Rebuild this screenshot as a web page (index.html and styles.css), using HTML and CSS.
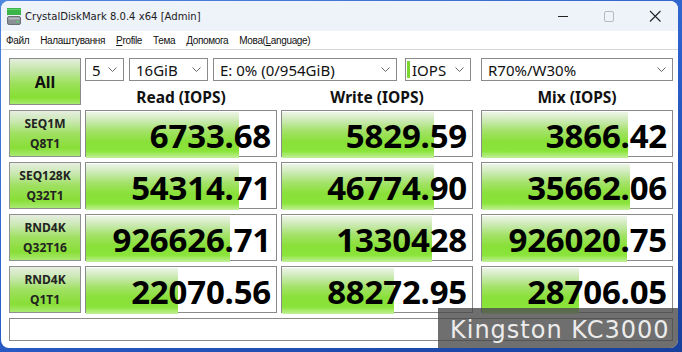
FILE: index.html
```html
<!DOCTYPE html>
<html lang="uk">
<head>
<meta charset="utf-8">
<title>CrystalDiskMark</title>
<link rel="stylesheet" href="styles.css">
</head>
<body>
<div class="window">
  <div class="titlebar">
    <svg class="appicon" width="14" height="17" viewBox="0 0 14 17">
      <rect x="0" y="0" width="14" height="7" fill="#3bb54a"/>
      <rect x="0" y="1" width="14" height="1" fill="#5fd36a"/>
      <rect x="0.5" y="8.5" width="13" height="8" rx="1.5" fill="#8a8f96" stroke="#6b7077"/>
      <rect x="1.5" y="9.5" width="11" height="2" fill="#b4b9bf"/>
      <rect x="9.5" y="13" width="2.5" height="1.5" fill="#4cd964"/>
    </svg>
    <span class="title">CrystalDiskMark 8.0.4 x64 [Admin]</span>
    <div class="controls">
      <svg class="ctl" width="46" height="30" viewBox="0 0 46 30"><line x1="18" y1="15.5" x2="28" y2="15.5" stroke="#222" stroke-width="1"/></svg>
      <svg class="ctl" width="46" height="30" viewBox="0 0 46 30"><rect x="18.5" y="10.5" width="9" height="10" rx="1.5" fill="none" stroke="#b9b9b9" stroke-width="1"/></svg>
      <svg class="ctl" width="46" height="30" viewBox="0 0 46 30"><path d="M18 10 L28.5 20.5 M28.5 10 L18 20.5" stroke="#222" stroke-width="1.1"/></svg>
    </div>
  </div>
  <div class="menubar">
    <span class="mi">Файл</span>
    <span class="mi">Налаштування</span>
    <span class="mi"><u>P</u>rofile</span>
    <span class="mi">Тема</span>
    <span class="mi">Допомога</span>
    <span class="mi">Мова(<u>L</u>anguage)</span>
  </div>
  <div class="client">
    <div class="top">
      <div class="allbtn">All</div>
      <div class="top-right">
        <div class="combos">
          <div class="combo c-count"><span>5</span><svg width="9" height="5" viewBox="0 0 9 5"><path d="M0.5 0.5 L4.5 4.5 L8.5 0.5" fill="none" stroke="#666"/></svg></div>
          <div class="combo c-size"><span>16GiB</span><svg width="9" height="5" viewBox="0 0 9 5"><path d="M0.5 0.5 L4.5 4.5 L8.5 0.5" fill="none" stroke="#666"/></svg></div>
          <div class="combo c-drive"><span>E: 0% (0/954GiB)</span><svg width="9" height="5" viewBox="0 0 9 5"><path d="M0.5 0.5 L4.5 4.5 L8.5 0.5" fill="none" stroke="#666"/></svg></div>
          <div class="combo c-unit"><i class="mark"></i><span>IOPS</span><svg width="9" height="5" viewBox="0 0 9 5"><path d="M0.5 0.5 L4.5 4.5 L8.5 0.5" fill="none" stroke="#666"/></svg></div>
          <div class="combo c-mix"><span>R70%/W30%</span><svg width="9" height="5" viewBox="0 0 9 5"><path d="M0.5 0.5 L4.5 4.5 L8.5 0.5" fill="none" stroke="#666"/></svg></div>
        </div>
        <div class="heads">
          <div class="head">Read (IOPS)</div>
          <div class="head">Write (IOPS)</div>
          <div class="head mixcol">Mix (IOPS)</div>
        </div>
      </div>
    </div>

    <div class="row">
      <div class="label">SEQ1M<br>Q8T1</div>
      <div class="cell"><div class="bar" style="width:153px"></div><div class="val">6733.68</div></div>
      <div class="cell"><div class="bar" style="width:152px"></div><div class="val">5829.59</div></div>
      <div class="cell mixcol"><div class="bar" style="width:146px"></div><div class="val">3866.42</div></div>
    </div>
    <div class="row">
      <div class="label">SEQ128K<br>Q32T1</div>
      <div class="cell"><div class="bar" style="width:153px"></div><div class="val">54314.71</div></div>
      <div class="cell"><div class="bar" style="width:152px"></div><div class="val">46774.90</div></div>
      <div class="cell mixcol"><div class="bar" style="width:148px"></div><div class="val">35662.06</div></div>
    </div>
    <div class="row">
      <div class="label">RND4K<br>Q32T16</div>
      <div class="cell"><div class="bar" style="width:144px"></div><div class="val">926626.71</div></div>
      <div class="cell"><div class="bar" style="width:150px"></div><div class="val">1330428</div></div>
      <div class="cell mixcol"><div class="bar" style="width:145px"></div><div class="val">926020.75</div></div>
    </div>
    <div class="row">
      <div class="label">RND4K<br>Q1T1</div>
      <div class="cell"><div class="bar" style="width:92px"></div><div class="val">22070.56</div></div>
      <div class="cell"><div class="bar" style="width:112px"></div><div class="val">88272.95</div></div>
      <div class="cell mixcol"><div class="bar" style="width:97px"></div><div class="val">28706.05</div></div>
    </div>
    <div class="comment"></div>
  </div>
  <div class="badge">Kingston KC3000</div>
</div>
</body>
</html>
```
FILE: styles.css
```css
html, body {
  margin: 0;
  padding: 0;
}
body {
  width: 682px;
  height: 352px;
  overflow: hidden;
  background: linear-gradient(160deg, #4f86e0 0%, #2b5fcb 50%, #173f9c 100%);
  font-family: "Noto Sans", "Open Sans", sans-serif;
}
.window {
  position: relative;
  margin: 1px 0 0 1px;
  width: 677px;
  height: 347px;
  background: #ffffff;
  border-radius: 8px;
  overflow: hidden;
  display: flex;
  flex-direction: column;
}
.titlebar {
  height: 30px;
  background: #eef3fa;
  display: flex;
  align-items: center;
  flex: none;
}
.appicon {
  margin-left: 6px;
  margin-top: 1px;
}
.title {
  margin-left: 4px;
  font-family: "DejaVu Sans Condensed", "Liberation Sans", sans-serif;
  font-size: 11.2px;
  color: #1a1a1a;
  margin-top: 1px;
}
.controls {
  margin-left: auto;
  display: flex;
}
.ctl {
  display: block;
}
.menubar {
  height: 18px;
  flex: none;
  display: flex;
  align-items: center;
  padding-left: 5px;
  border-bottom: 1px solid #d6d6d6;
  font-family: "Liberation Sans", sans-serif;
  font-size: 10px;
  letter-spacing: -0.35px;
  color: #111;
}
.mi {
  margin-right: 11px;
}
.client {
  flex: 1;
  padding: 8px 0 0 8px;
}
.top {
  display: flex;
}
.allbtn {
  width: 70px;
  height: 45px;
  border: 1px solid #8c8c8c;
  display: flex;
  align-items: center;
  justify-content: center;
  font-weight: 700;
  font-size: 16px;
  color: #111;
  background: linear-gradient(to bottom, #e4eedd 0%, #c3e6a8 25%, #9be15a 55%, #86df33 85%, #a6ea6c 100%);
}
.top-right {
  margin-left: 4px;
  display: flex;
  flex-direction: column;
}
.combos {
  display: flex;
  height: 23px;
}
.combo {
  box-sizing: border-box;
  height: 23px;
  border: 1px solid #8a8a8a;
  background: #fff;
  display: flex;
  align-items: center;
  padding: 0 6px 0 6px;
  font-size: 15px;
  color: #111;
}
.combo span {
  flex: 1;
  white-space: nowrap;
  overflow: hidden;
}
.combo svg {
  flex: none;
}
.c-count { width: 39px; margin-right: 5px; }
.c-size { width: 79px; margin-right: 5px; }
.c-drive { width: 184px; margin-right: 8px; }
.c-unit { width: 66px; margin-right: 10px; padding-left: 1px; }
.c-mix { width: 192px; }
.mark {
  display: block;
  width: 3px;
  height: 17px;
  background: #79d72e;
  margin-right: 2px;
}
.heads {
  display: flex;
  height: 24px;
}
.head {
  width: 192px;
  margin-right: 4px;
  text-align: center;
  font-weight: 700;
  font-size: 15.5px;
  line-height: 20px;
  padding-top: 6px;
  color: #111;
}
.heads .mixcol { margin-left: 4px; margin-right: 0; }
.row {
  display: flex;
  margin-top: 5px;
  height: 47px;
}
.label {
  box-sizing: border-box;
  width: 72px;
  height: 47px;
  border: 1px solid #909090;
  display: flex;
  align-items: center;
  justify-content: center;
  text-align: center;
  font-weight: 700;
  font-size: 12px;
  line-height: 20px;
  color: #222;
  background: linear-gradient(to bottom, #e6eee0 0%, #cbe8b4 22%, #9fe061 50%, #88de36 82%, #a9ea72 100%);
}
.cell {
  box-sizing: border-box;
  width: 192px;
  height: 47px;
  margin-left: 4px;
  border: 1px solid #8a8a8a;
  background: #fff;
  padding: 1px 0;
  display: grid;
}
.cell.mixcol { margin-left: 8px; }
.bar {
  grid-area: 1 / 1;
  height: 100%;
  background: linear-gradient(to bottom, #edf4e8 0%, #cdeab6 18%, #a2e266 42%, #89e038 65%, #8ae43a 85%, #c2f09a 100%);
}
.val {
  grid-area: 1 / 1;
  text-align: right;
  font-weight: 700;
  font-size: 33px;
  line-height: 44px;
  padding-right: 5px;
  padding-top: 2px;
  color: #000;
  letter-spacing: -0.2px;
}
.comment {
  box-sizing: border-box;
  margin-top: 5px;
  width: 664px;
  height: 23px;
  border: 1px solid #8a8a8a;
  background: #fff;
}
.badge {
  position: absolute;
  right: 0;
  bottom: 0;
  width: 228px;
  height: 40px;
  padding-left: 12px;
  background: rgba(70, 70, 70, 0.78);
  color: #ececec;
  font-family: "DejaVu Sans", sans-serif;
  font-size: 24px;
  line-height: 44px;
  letter-spacing: 1px;
  white-space: nowrap;
}
```
